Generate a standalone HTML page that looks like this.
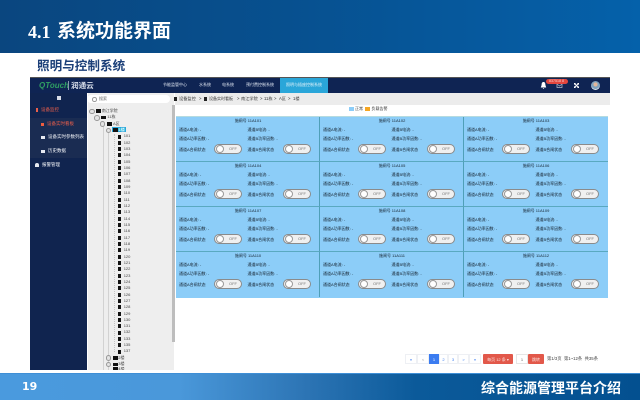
<!DOCTYPE html>
<html lang="zh">
<head>
<meta charset="utf-8">
<title>系统功能界面</title>
<style>
html,body{margin:0;padding:0;background:#fff}
body{width:640px;height:400px;position:relative;overflow:hidden;font-family:"Liberation Sans","Noto Sans CJK SC",sans-serif}
.a{position:absolute;white-space:nowrap}
#hd{left:0;top:0;width:640px;height:53px;background:linear-gradient(90deg,#0a467f 0%,#07508f 45%,#0561aa 100%)}
#foot{left:0;top:373px;width:640px;height:27px;background:linear-gradient(90deg,#4a9ade 0%,#4a98da 28%,#2c74b4 48%,#0b5a9a 65%,#035090 100%);border-top:1px solid #3f8fd6;box-sizing:border-box}
.nav{color:#dde4f0;font-size:4px;line-height:8px;top:81px}
.side{color:#f2f4f8;font-size:4.5px;line-height:8px}
.red{color:#f0604a}
.tree{font-size:4px;color:#444;line-height:6.33px}
.r{position:relative;height:6.33px;white-space:nowrap}
.r i{position:absolute;top:1.2px;left:30px;width:3px;height:4px;background:#111}
.r b{position:absolute;left:35.7px;top:0;font-weight:normal}
.f{position:absolute;width:5px;height:3.5px;background:#111;top:1.4px}
.o{position:absolute;width:3.6px;height:3.6px;border:.6px solid #999;border-radius:50%;background:#e4e4e4;top:.6px}
#grid{left:176px;top:116px;width:432px;height:182px;background:#8ccdf8;border-top:1px solid #b5dbe0;box-sizing:border-box;display:grid;grid-template-columns:144px 144px 144px;grid-template-rows:45px 45px 45px 45px}
.c{position:relative;font-size:4px;line-height:7px;color:#16222e;border-right:1px solid #4f9fb8;border-bottom:1px solid #5aa9c0;box-sizing:border-box}
.c:nth-child(3n){border-right:0}
.c:nth-child(n+10){border-bottom:0}
.c span{position:absolute;white-space:nowrap}
.t{left:0;width:144px;text-align:center;top:-.5px}
.l1{left:3px}.l2{left:71.5px}
.y1{top:8.5px}.y2{top:17.5px}.y3{top:28.5px}
.c u{position:absolute;top:27px;width:26px;height:8px;border:1px solid #8b8b8b;border-radius:5.5px;background:#f0f0f0;text-decoration:none;color:#777;font-size:4px;line-height:8px}
.c u em{font-style:normal;position:absolute;right:4px;top:0}
.c u s{position:absolute;left:1px;top:0;width:6px;height:6px;border:1px solid #999;border-radius:50%;background:#fff}
.u1{left:38px}.u2{left:107px}
.pg{top:354px;height:10px;line-height:10px;text-align:center;font-size:4px;color:#3b7cf0;background:#fff;border:.5px solid #eef0f4;box-sizing:border-box}
.bc{top:95px;font-size:4.2px;line-height:8px;color:#333}
</style>
</head>
<body>
<div class="a" id="hd"></div>
<div class="a" style="left:28px;top:19px;font-family:'Liberation Serif',serif;font-weight:bold;font-size:18px;line-height:26px;color:#fff">4.1</div>
<div class="a" style="left:57px;top:19px;font-weight:bold;font-size:19px;line-height:26px;color:#fff">系统功能界面</div>
<div class="a" style="left:37px;top:57px;font-weight:bold;font-size:12.6px;line-height:18px;color:#1b3f78">照明与控制系统</div>

<!-- top bar -->
<div class="a" style="left:30px;top:77px;width:580px;height:16px;background:#0f2453;border-top:1px solid #555;box-sizing:border-box"></div>
<div class="a" style="left:39px;top:81px;font-size:8px;line-height:10px;font-style:italic;font-weight:bold;color:#2f9f63">QTouch</div>
<div class="a" style="left:68px;top:81px;width:1px;height:9px;background:#8a97b0"></div>
<div class="a" style="left:71px;top:81px;font-size:7.6px;line-height:10px;font-weight:bold;color:#d9dfeb">润通云</div>
<div class="a nav" style="left:163px">节能监管中心</div>
<div class="a nav" style="left:199px">水系统</div>
<div class="a nav" style="left:222px">电系统</div>
<div class="a nav" style="left:246px">预付费控制系统</div>
<div class="a" style="left:280px;top:78px;width:48px;height:15px;background:#2aa6d9"></div>
<div class="a nav" style="left:286px;color:#e2f3fa">照明与插座控制系统</div>
<svg class="a" style="left:538.500px;top:80.500px" width="9" height="9" viewBox="0 0 9 9"><path d="M4.500 1C3 1 2.600 2.300 2.600 4L1.800 6.500H7.200L6.400 4C6.400 2.300 6 1 4.500 1ZM3.700 7H5.300L4.500 8Z" fill="#fff"/></svg>
<svg class="a" style="left:556px;top:82px" width="7" height="7" viewBox="0 0 7 7"><rect x="1" y="1.500" width="5" height="4" fill="none" stroke="#a8b2c6" stroke-width=".8"/><path d="M1 2L3.500 4L6 2" fill="none" stroke="#a8b2c6" stroke-width=".7"/></svg>
<div class="a" style="left:545.500px;top:79px;width:22px;height:5px;background:#e2463e;border-radius:3px;color:#f4d0cc;font-size:3.6px;line-height:5px;text-align:center">837518 8</div>
<svg class="a" style="left:572px;top:81px" width="9" height="9" viewBox="0 0 9 9"><path d="M2.500 2.500L6.500 6.500M6.500 2.500L2.500 6.500" stroke="#fff" stroke-width="1"/><path d="M2 2H4L2 4ZM7 2H5L7 4ZM2 7H4L2 5ZM7 7H5L7 5Z" fill="#fff"/></svg>
<div class="a" style="left:591px;top:81px;width:9px;height:9px;border-radius:50%;background:radial-gradient(circle at 50% 38%,#e3b79a 0 28%,#7fa3bf 30% 62%,#dfe8ee 64%)"></div>

<!-- sidebar -->
<div class="a" style="left:30px;top:93px;width:57px;height:277px;background:#10244f"></div>
<div class="a" style="left:30px;top:118px;width:57px;height:40px;background:#1a2c52"></div>
<div class="a" style="left:57px;top:96px;width:4px;height:3.500px;background:#d8dde8"></div>
<div class="a" style="left:35.500px;top:108px;width:2px;height:4px;background:#e8604c"></div>
<div class="a side red" style="left:41px;top:106px">设备监控</div>
<div class="a" style="left:41px;top:122.500px;width:3px;height:3px;background:#ee5d3f"></div>
<div class="a side red" style="left:47px;top:120px">设备实时看板</div>
<div class="a" style="left:41px;top:135.500px;width:4px;height:3px;background:#e6e9f0"></div>
<div class="a side" style="left:48px;top:133px">设备实时参数列表</div>
<div class="a" style="left:41px;top:149.500px;width:4px;height:3px;background:#e6e9f0"></div>
<div class="a side" style="left:48px;top:147px">历史数据</div>
<div class="a" style="left:35px;top:163px;width:3.500px;height:4px;background:#e6e9f0;border-radius:2px 2px 0 0"></div>
<div class="a side" style="left:42px;top:161px">报警管理</div>

<!-- tree panel -->
<div class="a" style="left:88px;top:93px;width:86px;height:277px;background:#eeeeee"></div>
<div class="a" style="left:175px;top:93px;width:435px;height:12px;background:#ececec"></div>
<div class="a" style="left:87px;top:95px;width:83px;height:8px;background:#fff;border-radius:4px;font-size:4px;line-height:8px;color:#666;text-indent:12px">搜索</div>
<div class="a" style="left:92px;top:97px;width:2.500px;height:2.500px;border:.6px solid #999;border-radius:50%"></div>
<div class="a" style="left:172px;top:105px;width:3px;height:237px;background:#bdbdbd"></div>
<div class="a" style="left:102.500px;top:122px;width:0;height:248px;border-left:.6px solid #d2d2d2"></div>
<div class="a" style="left:107.500px;top:128px;width:0;height:242px;border-left:.6px solid #d2d2d2"></div>
<div class="a" style="left:113.500px;top:134px;width:0;height:218px;border-left:.6px dotted #c4c4c4"></div>
<div class="a" style="left:112px;top:126.700px;width:13.700px;height:5px;background:#3fc2e4;border:.5px solid #2aa6d9;box-sizing:border-box"></div>

<div class="a tree" style="left:88px;top:108px;width:84px">
<div class="r"><span class="o" style="left:1px"></span><span class="f" style="left:8px"></span><b style="left:13.700px">南江学院</b></div>
<div class="r"><span class="o" style="left:6px"></span><span class="f" style="left:13.300px"></span><b style="left:19.300px">11栋</b></div>
<div class="r"><span class="o" style="left:11.500px"></span><span class="f" style="left:18.700px"></span><b style="left:25px">A区</b></div>
<div class="r"><span class="o" style="left:17.500px"></span><span class="f" style="left:24.500px"></span><b style="left:30.500px;color:#fff">1楼</b></div>
<div class="r"><i></i><b>101</b></div>
<div class="r"><i></i><b>102</b></div>
<div class="r"><i></i><b>103</b></div>
<div class="r"><i></i><b>104</b></div>
<div class="r"><i></i><b>105</b></div>
<div class="r"><i></i><b>106</b></div>
<div class="r"><i></i><b>107</b></div>
<div class="r"><i></i><b>108</b></div>
<div class="r"><i></i><b>109</b></div>
<div class="r"><i></i><b>110</b></div>
<div class="r"><i></i><b>111</b></div>
<div class="r"><i></i><b>112</b></div>
<div class="r"><i></i><b>113</b></div>
<div class="r"><i></i><b>114</b></div>
<div class="r"><i></i><b>115</b></div>
<div class="r"><i></i><b>116</b></div>
<div class="r"><i></i><b>117</b></div>
<div class="r"><i></i><b>118</b></div>
<div class="r"><i></i><b>119</b></div>
<div class="r"><i></i><b>120</b></div>
<div class="r"><i></i><b>121</b></div>
<div class="r"><i></i><b>122</b></div>
<div class="r"><i></i><b>123</b></div>
<div class="r"><i></i><b>124</b></div>
<div class="r"><i></i><b>125</b></div>
<div class="r"><i></i><b>126</b></div>
<div class="r"><i></i><b>127</b></div>
<div class="r"><i></i><b>128</b></div>
<div class="r"><i></i><b>129</b></div>
<div class="r"><i></i><b>130</b></div>
<div class="r"><i></i><b>131</b></div>
<div class="r"><i></i><b>132</b></div>
<div class="r"><i></i><b>133</b></div>
<div class="r"><i></i><b>135</b></div>
<div class="r"><i></i><b>137</b></div>
<div class="r"><span class="o" style="left:17.500px"></span><span class="f" style="left:24.500px"></span><b style="left:30.300px">2楼</b></div>
<div class="r"><span class="o" style="left:17.500px"></span><span class="f" style="left:24.500px"></span><b style="left:30.300px">3楼</b></div>
</div>
<div class="a" style="left:88px;top:367px;width:84px;height:3px;overflow:hidden;font-size:4px;line-height:5px;color:#444"><span class="f" style="left:24.500px;top:0"></span><span style="position:absolute;left:30.300px;top:-1px">4楼</span></div>

<!-- breadcrumb -->
<div class="a" style="left:174px;top:97px;width:2.500px;height:4px;background:#222"></div>
<div class="a bc" style="left:179px">设备监控</div>
<div class="a bc" style="left:199px">&gt;</div>
<div class="a" style="left:204px;top:97px;width:2.500px;height:4px;background:#222"></div>
<div class="a bc" style="left:209px;font-size:4px">设备实时看板</div>
<div class="a bc" style="left:237px">&gt;</div>
<div class="a bc" style="left:241px">南江学院</div>
<div class="a bc" style="left:260px">&gt;</div>
<div class="a bc" style="left:264px">11栋</div>
<div class="a bc" style="left:274px">&gt;</div>
<div class="a bc" style="left:279px">A区</div>
<div class="a bc" style="left:288px">&gt;</div>
<div class="a bc" style="left:293px">1楼</div>

<!-- legend -->
<div class="a" style="left:349px;top:106.500px;width:5px;height:4px;background:#8ccdf8"></div>
<div class="a" style="left:355px;top:105px;font-size:4px;line-height:7px;color:#333">正常</div>
<div class="a" style="left:365px;top:106.500px;width:5px;height:4px;background:#f5a623"></div>
<div class="a" style="left:371.500px;top:105px;font-size:4px;line-height:7px;color:#333">负载告警</div>

<!-- grid -->
<div class="a" id="grid">
<div class="c"><span class="t">施闸号 11A101</span><span class="l1 y1">通道A电流: -</span><span class="l2 y1">通道B电流: -</span><span class="l1 y2">通道A功率因数: -</span><span class="l2 y2">通道B功率因数: -</span><span class="l1 y3">通道A合闸状态</span><span class="l2 y3">通道B合闸状态</span><u class="u1"><s></s><em>OFF</em></u><u class="u2"><s></s><em>OFF</em></u></div>
<div class="c"><span class="t">施闸号 11A102</span><span class="l1 y1">通道A电流: -</span><span class="l2 y1">通道B电流: -</span><span class="l1 y2">通道A功率因数: -</span><span class="l2 y2">通道B功率因数: -</span><span class="l1 y3">通道A合闸状态</span><span class="l2 y3">通道B合闸状态</span><u class="u1"><s></s><em>OFF</em></u><u class="u2"><s></s><em>OFF</em></u></div>
<div class="c"><span class="t">施闸号 11A103</span><span class="l1 y1">通道A电流: -</span><span class="l2 y1">通道B电流: -</span><span class="l1 y2">通道A功率因数: -</span><span class="l2 y2">通道B功率因数: -</span><span class="l1 y3">通道A合闸状态</span><span class="l2 y3">通道B合闸状态</span><u class="u1"><s></s><em>OFF</em></u><u class="u2"><s></s><em>OFF</em></u></div>
<div class="c"><span class="t">施闸号 11A104</span><span class="l1 y1">通道A电流: -</span><span class="l2 y1">通道B电流: -</span><span class="l1 y2">通道A功率因数: -</span><span class="l2 y2">通道B功率因数: -</span><span class="l1 y3">通道A合闸状态</span><span class="l2 y3">通道B合闸状态</span><u class="u1"><s></s><em>OFF</em></u><u class="u2"><s></s><em>OFF</em></u></div>
<div class="c"><span class="t">施闸号 11A105</span><span class="l1 y1">通道A电流: -</span><span class="l2 y1">通道B电流: -</span><span class="l1 y2">通道A功率因数: -</span><span class="l2 y2">通道B功率因数: -</span><span class="l1 y3">通道A合闸状态</span><span class="l2 y3">通道B合闸状态</span><u class="u1"><s></s><em>OFF</em></u><u class="u2"><s></s><em>OFF</em></u></div>
<div class="c"><span class="t">施闸号 11A106</span><span class="l1 y1">通道A电流: -</span><span class="l2 y1">通道B电流: -</span><span class="l1 y2">通道A功率因数: -</span><span class="l2 y2">通道B功率因数: -</span><span class="l1 y3">通道A合闸状态</span><span class="l2 y3">通道B合闸状态</span><u class="u1"><s></s><em>OFF</em></u><u class="u2"><s></s><em>OFF</em></u></div>
<div class="c"><span class="t">施闸号 11A107</span><span class="l1 y1">通道A电流: -</span><span class="l2 y1">通道B电流: -</span><span class="l1 y2">通道A功率因数: -</span><span class="l2 y2">通道B功率因数: -</span><span class="l1 y3">通道A合闸状态</span><span class="l2 y3">通道B合闸状态</span><u class="u1"><s></s><em>OFF</em></u><u class="u2"><s></s><em>OFF</em></u></div>
<div class="c"><span class="t">施闸号 11A108</span><span class="l1 y1">通道A电流: -</span><span class="l2 y1">通道B电流: -</span><span class="l1 y2">通道A功率因数: -</span><span class="l2 y2">通道B功率因数: -</span><span class="l1 y3">通道A合闸状态</span><span class="l2 y3">通道B合闸状态</span><u class="u1"><s></s><em>OFF</em></u><u class="u2"><s></s><em>OFF</em></u></div>
<div class="c"><span class="t">施闸号 11A109</span><span class="l1 y1">通道A电流: -</span><span class="l2 y1">通道B电流: -</span><span class="l1 y2">通道A功率因数: -</span><span class="l2 y2">通道B功率因数: -</span><span class="l1 y3">通道A合闸状态</span><span class="l2 y3">通道B合闸状态</span><u class="u1"><s></s><em>OFF</em></u><u class="u2"><s></s><em>OFF</em></u></div>
<div class="c"><span class="t">施闸号 11A110</span><span class="l1 y1">通道A电流: -</span><span class="l2 y1">通道B电流: -</span><span class="l1 y2">通道A功率因数: -</span><span class="l2 y2">通道B功率因数: -</span><span class="l1 y3">通道A合闸状态</span><span class="l2 y3">通道B合闸状态</span><u class="u1"><s></s><em>OFF</em></u><u class="u2"><s></s><em>OFF</em></u></div>
<div class="c"><span class="t">施闸号 11A111</span><span class="l1 y1">通道A电流: -</span><span class="l2 y1">通道B电流: -</span><span class="l1 y2">通道A功率因数: -</span><span class="l2 y2">通道B功率因数: -</span><span class="l1 y3">通道A合闸状态</span><span class="l2 y3">通道B合闸状态</span><u class="u1"><s></s><em>OFF</em></u><u class="u2"><s></s><em>OFF</em></u></div>
<div class="c"><span class="t">施闸号 11A112</span><span class="l1 y1">通道A电流: -</span><span class="l2 y1">通道B电流: -</span><span class="l1 y2">通道A功率因数: -</span><span class="l2 y2">通道B功率因数: -</span><span class="l1 y3">通道A合闸状态</span><span class="l2 y3">通道B合闸状态</span><u class="u1"><s></s><em>OFF</em></u><u class="u2"><s></s><em>OFF</em></u></div>
</div>

<!-- pagination -->
<div class="a pg" style="left:405px;width:12px;font-weight:bold">«</div>
<div class="a pg" style="left:417px;width:12px;color:#999">&lt;</div>
<div class="a pg" style="left:429px;width:10px;background:#3b7cf0;color:#fff;border-color:#3b7cf0">1</div>
<div class="a pg" style="left:439px;width:9px">2</div>
<div class="a pg" style="left:448px;width:10px">3</div>
<div class="a pg" style="left:458px;width:11px">&gt;</div>
<div class="a pg" style="left:469px;width:12px;font-weight:bold">»</div>
<div class="a pg" style="left:483px;width:30px;background:#e2584a;border-color:#e2584a;color:#fbe3df;border-radius:1px">每页 12 条 ▾</div>
<div class="a pg" style="left:516px;width:12px;color:#666;border-color:#e6e6e6">1</div>
<div class="a pg" style="left:528px;width:16px;background:#e2584a;border-color:#e2584a;color:#fbe3df;border-radius:1px">跳转</div>
<div class="a" style="left:547px;top:355px;font-size:4.3px;line-height:8px;color:#444">第1/3页 &nbsp;第1~12条 &nbsp;共35条</div>

<!-- footer -->
<div class="a" id="foot"></div>
<div class="a" style="left:22px;top:379px;font-family:'DejaVu Sans',sans-serif;font-weight:bold;font-size:11px;line-height:16px;color:#fff">19</div>
<div class="a" style="left:481px;top:379px;font-weight:bold;font-size:14px;line-height:18px;color:#fff">综合能源管理平台介绍</div>
</body>
</html>
